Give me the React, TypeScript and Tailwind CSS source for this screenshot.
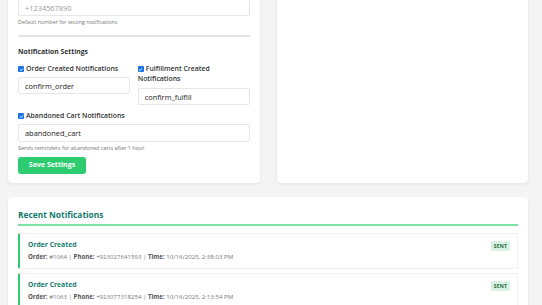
import React from "react";

function Check({ label }: { label: React.ReactNode }) {
  return (
    <div className="text-[6.9px] leading-[10px] font-semibold text-[#333]">
      <span className="inline-flex align-[-0.5px] mr-[2px] w-[6px] h-[6px] rounded-[1px] bg-[#1a73e8] items-center justify-center">
        <svg viewBox="0 0 10 10" className="w-[5px] h-[5px]">
          <path d="M2 5.2 L4.2 7.3 L8 2.8" fill="none" stroke="#fff" strokeWidth="1.8" />
        </svg>
      </span>
      {label}
    </div>
  );
}

function Input({ value, placeholder, h = "h-[17px]" }: { value?: string; placeholder?: string; h?: string }) {
  return (
    <div className={`${h} border border-[#e6e6e6] rounded-[2px] bg-white flex items-center px-[6px] text-[7.4px] leading-[10px]`}>
      {value ? (
        <span className="text-[#222]">{value}</span>
      ) : (
        <span className="text-[#9a9a9a]">{placeholder}</span>
      )}
    </div>
  );
}

function Item({ order, phone, time }: { order: string; phone: string; time: string }) {
  return (
    <div className="h-[36px] bg-white border border-[#efefef] border-l-[2px] border-l-[#2ecc71] rounded-[2px] pl-[8px] pr-[7px] pt-[6px] flex justify-between">
      <div>
        <div className="text-[6.8px] leading-[10px] font-bold text-[#157a6e]">Order Created</div>
        <div className="mt-[3px] text-[6.1px] leading-[8px] text-[#777] whitespace-nowrap">
          <span className="font-bold text-[#555]">Order:</span> {order} |{" "}
          <span className="font-bold text-[#555]">Phone:</span> {phone} |{" "}
          <span className="font-bold text-[#555]">Time:</span> {time}
        </div>
      </div>
      <div className="mt-[1px] h-[10px] px-[3px] rounded-[2px] bg-[#d6f2e2] text-[#2a6a45] text-[5px] font-bold leading-[10px] tracking-[0.2px]">
        SENT
      </div>
    </div>
  );
}

export default function App() {
  return (
    <div
      className="w-[542px] h-[305px] overflow-hidden bg-[#f4f4f4]"
      style={{ fontFamily: '"Open Sans", "Noto Sans", sans-serif' }}
    >
      <div className="w-[520px] ml-[8px] mt-[-11px]">
        <div className="grid grid-cols-2 gap-[17px]">
          <div className="bg-white rounded-[4px] shadow-[0_1px_3px_rgba(0,0,0,0.08)] px-[10px] pt-[10px] pb-[9px]">
            <Input placeholder="+1234567890" />
            <div className="mt-[2px] text-[5.4px] leading-[8px] text-[#777]">
              Default number for testing notifications
            </div>
            <div className="mt-[9px] h-[2px] bg-[#e3e3e3]" />
            <div className="mt-[10px] text-[6.8px] leading-[10px] font-bold text-[#333]">
              Notification Settings
            </div>
            <div className="mt-[7px] grid grid-cols-2 gap-[8px]">
              <div>
                <Check label="Order Created Notifications" />
                <div className="mt-[3px]">
                  <Input value="confirm_order" />
                </div>
              </div>
              <div>
                <Check
                  label={
                    <>
                      Fulfillment Created
                      <br />
                      Notifications
                    </>
                  }
                />
                <div className="mt-[4px]">
                  <Input value="confirm_fulfill" />
                </div>
              </div>
            </div>
            <div className="mt-[6px]">
              <Check label="Abandoned Cart Notifications" />
            </div>
            <div className="mt-[3px]">
              <Input value="abandoned_cart" h="h-[18px]" />
            </div>
            <div className="mt-[2px] text-[5.4px] leading-[8px] text-[#777]">
              Sends reminders for abandoned carts after 1 hour
            </div>
            <div className="mt-[5px] w-[68px] h-[17px] rounded-[3px] bg-[#2ecc71] text-white text-[7px] font-bold flex items-center justify-center">
              Save Settings
            </div>
          </div>
          <div className="bg-white rounded-[4px] shadow-[0_1px_3px_rgba(0,0,0,0.08)]" />
        </div>
        <div className="mt-[14px] bg-white rounded-[4px] shadow-[0_1px_3px_rgba(0,0,0,0.08)] px-[10px] pt-[12px] pb-[10px]">
          <div className="text-[8.4px] leading-[12px] font-bold text-[#157a6e]">Recent Notifications</div>
          <div className="mt-[3px] h-[1.5px] bg-[#7ee2a4]" />
          <div className="mt-[7px] flex flex-col gap-[4px]">
            <Item order="#1064" phone="+923027641593" time="10/16/2025, 2:38:03 PM" />
            <Item order="#1063" phone="+923077318254" time="10/16/2025, 2:13:54 PM" />
          </div>
        </div>
      </div>
    </div>
  );
}
